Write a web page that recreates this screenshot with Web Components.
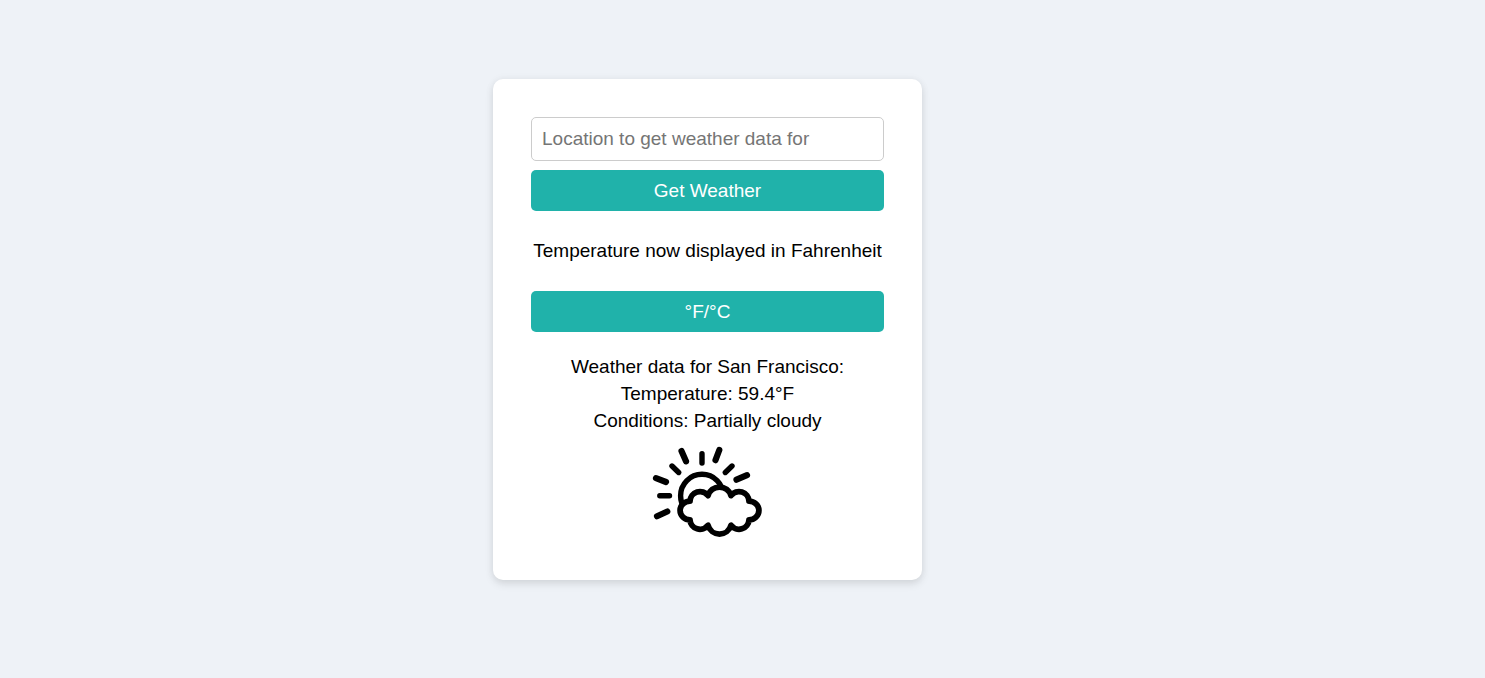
<!DOCTYPE html>
<html lang="en">
<head>
<meta charset="utf-8">
<meta name="viewport" content="width=device-width, initial-scale=1">
<title>Weather</title>
<style>
  body { margin: 0; background: #eef2f7; font: 19px/27px Arial, "Liberation Sans", sans-serif; color: #000; }
</style>
</head>
<body>
<weather-app></weather-app>

<script>
const define = (name, html) => {
  const template = document.createElement('template');
  template.innerHTML = html;
  customElements.define(name, class extends HTMLElement {
    constructor() {
      super();
      this.attachShadow({ mode: 'open' }).append(template.content.cloneNode(true));
    }
  });
};

define('weather-card', `
  <style>
    :host { display: block; box-sizing: border-box; width: 100%; max-width: 429px; padding: 38px;
      background: #fff; border-radius: 10px; box-shadow: 0 4px 8px rgba(0, 0, 0, .1), 0 0 8px rgba(0, 0, 0, .05); }
  </style>
  <slot></slot>`);

define('action-button', `
  <style>
    :host { display: block; }
    button { display: block; width: 100%; padding: 7px 10px; border: 0; border-radius: 5px;
      background: #20b2aa; color: #fff; font: inherit; cursor: pointer; }
    button:hover { background: #1c9c95; }
  </style>
  <button type="button"><slot></slot></button>`);

define('location-field', `
  <style>
    :host { display: block; }
    input { display: block; box-sizing: border-box; width: 100%; height: 44px; padding: 10px;
      border: 1px solid #ccc; border-radius: 5px; background: #fff; font: inherit; color: #000; }
    input::placeholder { color: #757575; }
  </style>
  <input type="text" aria-label="Location" placeholder="Location to get weather data for">`);

define('partly-cloudy-icon', `
  <style>
    :host { display: block; }
    svg { display: block; width: 110px; height: 90px; margin: 0 auto; overflow: visible; }
  </style>
  <svg viewBox="0 0 110 90" fill="none" stroke="#000" stroke-width="5.4" stroke-linecap="round" role="img" aria-label="Partially cloudy">
    <path d="M49 6.8V16M19 19L25.7 25.5M79 19L72.3 25.5M6.8 48.7H16.5"/>
    <path stroke-width="6.2" d="M28.5 4L33 14.3M66.3 3L62.5 13.2M3 31.2L13 35M94 28.2L83.5 32.7M4 69.2L14.3 64.5"/>
    <circle cx="49" cy="48.7" r="21.4"/>
    <path fill="#fff" stroke-width="5.8" stroke-linejoin="round" d="M37 54.2A10 10 0 0 1 55 48.6A12 12 0 0 1 78 48.6A10 10 0 0 1 96 54.2A9.9 9.3 0 0 1 96 72.8A10 10 0 0 1 78 78.2A11.9 11.9 0 0 1 55 78.2A10 10 0 0 1 37 72.8A9.9 9.3 0 0 1 37 54.2Z"/>
  </svg>`);

define('weather-report', `
  <style>
    :host { display: block; text-align: center; }
    p { margin: 0; }
    partly-cloudy-icon { margin: 13px 0 5px; }
  </style>
  <p><slot name="place"></slot></p>
  <p><slot name="temperature"></slot></p>
  <p><slot name="conditions"></slot></p>
  <partly-cloudy-icon></partly-cloudy-icon>`);

define('weather-app', `
  <style>
    :host { display: flex; justify-content: center; align-items: center; box-sizing: border-box;
      min-height: 100vh; padding: 0 70px 19px 0; }
    .status { margin: 26px 0 27px; text-align: center; }
    location-field { margin-bottom: 9px; }
    weather-report { margin-top: 21px; }
    @media (max-width: 560px) { :host { padding: 16px; } }
  </style>
  <weather-card>
    <location-field></location-field>
    <action-button>Get Weather</action-button>
    <p class="status" role="status">Temperature now displayed in Fahrenheit</p>
    <action-button>°F/°C</action-button>
    <weather-report>
      <span slot="place">Weather data for San Francisco:</span>
      <span slot="temperature">Temperature: 59.4°F</span>
      <span slot="conditions">Conditions: Partially cloudy</span>
    </weather-report>
  </weather-card>`);
</script>
</body>
</html>
